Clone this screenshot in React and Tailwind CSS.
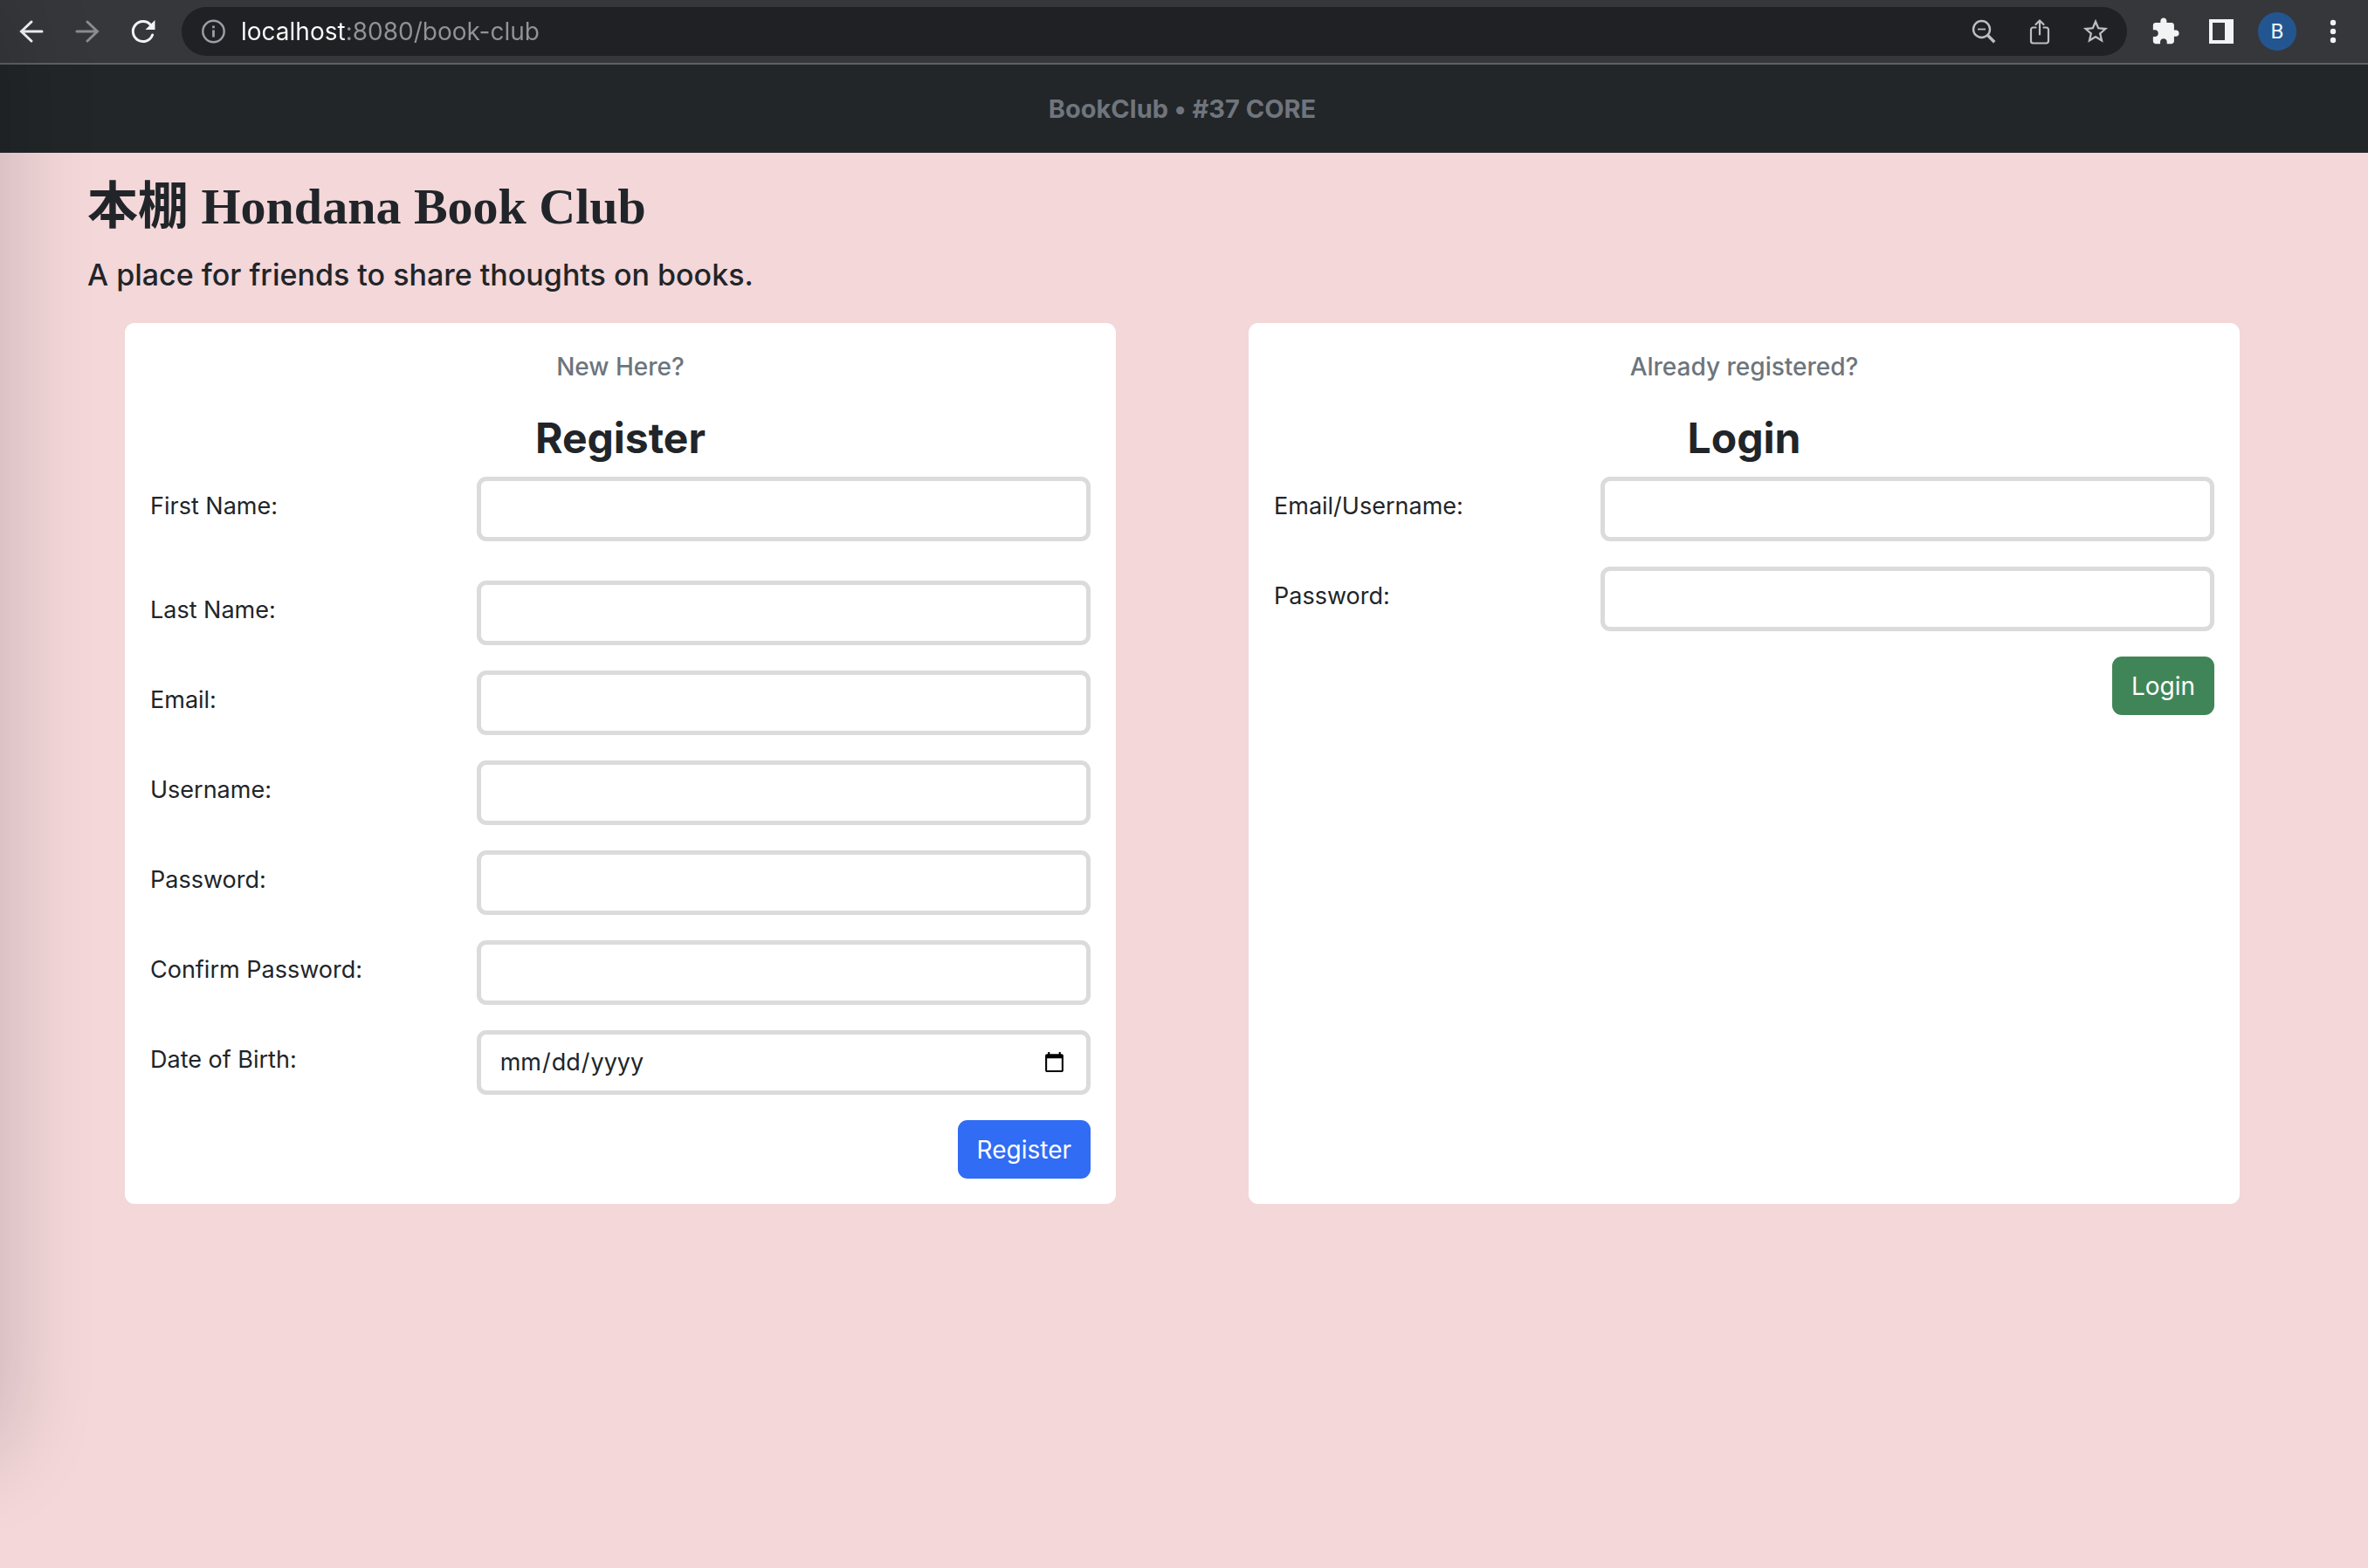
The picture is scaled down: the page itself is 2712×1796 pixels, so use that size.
import React from "react";

function ToolbarButton({ label, children }) {
  return (
    <button type="button" aria-label={label} className="flex h-14 w-16 shrink-0 items-center justify-center">
      {children}
    </button>
  );
}

function BrowserBar() {
  return (
    <header className="flex h-[74px] items-center border-b-2 border-[#5f6063] bg-[#36373b] pr-2 pl-1 text-[#f1f3f4]">
      <ToolbarButton label="Back">
        <svg width="32" height="32" viewBox="0 0 32 32" fill="none" stroke="currentColor" strokeWidth="3" strokeLinecap="round">
          <path d="M28 16H5M16 5L4.500 16L16 27" />
        </svg>
      </ToolbarButton>
      <ToolbarButton label="Forward">
        <svg width="32" height="32" viewBox="0 0 32 32" fill="none" stroke="#8b8c8f" strokeWidth="3" strokeLinecap="round">
          <path d="M4 16H27M16 5L27.500 16L16 27" />
        </svg>
      </ToolbarButton>
      <ToolbarButton label="Reload">
        <svg width="32" height="32" viewBox="0 0 32 32">
          <path d="M26.600 20A11.500 11.500 0 1 1 24.500 8.500" fill="none" stroke="currentColor" strokeWidth="3" strokeLinecap="round" />
          <path d="M29.500 3V14H18.500Z" fill="currentColor" />
        </svg>
      </ToolbarButton>
      <div className="mx-3 flex h-14 flex-1 items-center rounded-full bg-[#202124] pr-1 pl-[22px] text-[#bdbec0]">
        <svg width="30" height="30" viewBox="0 0 30 30" className="mr-4 shrink-0 text-[#9aa0a6]">
          <circle cx="14.500" cy="15" r="12.200" fill="none" stroke="currentColor" strokeWidth="2.400" />
          <path d="M14.500 13.500V21.500M14.500 8.500V11.200" stroke="currentColor" strokeWidth="2.800" />
        </svg>
        <input
          type="text"
          aria-label="Address"
          defaultValue="localhost:8080/book-club"
          className="min-w-0 flex-1 bg-[linear-gradient(90deg,#ffffff_121px,#929396_121px)] bg-clip-text font-['Inter',sans-serif] text-[28px] text-transparent outline-none"
        />
        <ToolbarButton label="Zoom out">
          <svg width="32" height="32" viewBox="0 0 32 32" fill="none" stroke="currentColor">
            <circle cx="13.500" cy="13.500" r="9.500" strokeWidth="2.400" />
            <path d="M9 13.500H18" strokeWidth="1.800" />
            <path d="M20.300 20.300L28.200 28.200" strokeWidth="3.400" />
          </svg>
        </ToolbarButton>
        <ToolbarButton label="Share">
          <svg width="32" height="32" viewBox="0 0 32 32" fill="none" stroke="currentColor" strokeWidth="2.200" strokeLinecap="round" strokeLinejoin="round">
            <path d="M11.500 11.500H8.500A2.500 2.500 0 0 0 6 14V27A2.500 2.500 0 0 0 8.500 29.500H23.500A2.500 2.500 0 0 0 26 27V14A2.500 2.500 0 0 0 23.500 11.500H20.500" />
            <path d="M16 19.500V4M11.500 8L16 3.500L20.500 8" />
          </svg>
        </ToolbarButton>
        <ToolbarButton label="Bookmark this page">
          <svg width="34" height="34" viewBox="0 0 24 24" fill="currentColor">
            <path d="M22 9.240l-7.190-.62L12 2 9.190 8.630 2 9.240l5.460 4.730L5.820 21 12 17.270 18.180 21l-1.630-7.030L22 9.240zM12 15.400l-3.760 2.270 1-4.280-3.320-2.880 4.380-.38L12 6.100l1.710 4.040 4.380.38-3.320 2.880 1 4.280L12 15.400z" />
          </svg>
        </ToolbarButton>
      </div>
      <ToolbarButton label="Extensions">
        <svg width="34" height="34" viewBox="0 0 24 24" fill="currentColor">
          <path d="M20.500 11H19V7c0-1.100-.9-2-2-2h-4V3.500C13 2.120 11.880 1 10.500 1S8 2.120 8 3.500V5H4c-1.100 0-1.990.9-1.990 2v3.800H3.500c1.490 0 2.700 1.210 2.700 2.700s-1.210 2.700-2.700 2.700H2V20c0 1.100.9 2 2 2h3.800v-1.500c0-1.490 1.210-2.700 2.700-2.700 1.490 0 2.700 1.210 2.700 2.700V22H17c1.100 0 2-.9 2-2v-4h1.500c1.380 0 2.500-1.120 2.500-2.500S21.880 11 20.500 11z" />
        </svg>
      </ToolbarButton>
      <ToolbarButton label="Side panel">
        <svg width="28" height="28" viewBox="0 0 28 28" fill="currentColor">
          <path fillRule="evenodd" d="M0 0H28V28H0ZM4 4V24H18V4Z" />
        </svg>
      </ToolbarButton>
      <ToolbarButton label="Profile">
        <span className="flex size-11 items-center justify-center rounded-full bg-[#235691] font-['Roboto',sans-serif] text-[24px]">B</span>
      </ToolbarButton>
      <ToolbarButton label="Menu">
        <svg width="32" height="32" viewBox="0 0 32 32" fill="currentColor">
          <circle cx="16" cy="6" r="3.200" />
          <circle cx="16" cy="16" r="3.200" />
          <circle cx="16" cy="26" r="3.200" />
        </svg>
      </ToolbarButton>
    </header>
  );
}

function Field({ id, label, type = "text", className = "" }) {
  return (
    <div className={`grid grid-cols-[1fr_2fr] gap-x-[22px] ${className}`}>
      <label htmlFor={id} className="text-[27px] leading-[68px]">
        {label}
      </label>
      <input
        id={id}
        type={type}
        className="h-[74px] w-full min-w-0 rounded-[11px] border-[5px] border-[#dbdbdb] bg-white px-[21px] text-[27px] outline-none"
      />
    </div>
  );
}

function Card({ hint, title, children }) {
  return (
    <section className="rounded-[11px] bg-white p-[29px]">
      <p className="text-center leading-[43px] font-medium text-[#6c757d]">{hint}</p>
      <h2 className="mt-[30px] mb-[14px] text-center text-[48px] leading-[60px] font-bold">{title}</h2>
      {children}
    </section>
  );
}

export default function App() {
  return (
    <div className="relative min-h-screen overflow-hidden bg-[#f3d7d9] font-['Inter',sans-serif] text-[28px] text-[#212529]">
      <BrowserBar />
      <nav className="flex h-[101px] items-center justify-center bg-[#222629] pr-1 text-[29px] font-bold text-[#70757d]">
        BookClub • #37 CORE
      </nav>
      <main className="pr-[104px] pl-[100px]">
        <h1 className="pt-[27px] font-['Liberation_Serif','Noto_Sans_CJK_JP',serif] text-[58px] leading-[69px] font-bold">
          本棚 Hondana Book Club
        </h1>
        <p className="mt-[22px] text-[34px] leading-[43px] font-medium">A place for friends to share thoughts on books.</p>
        <div className="mx-[43px] mt-[34px] grid grid-cols-2 gap-[152px]">
          <Card hint="New Here?" title="Register">
            <form className="flex flex-col gap-[29px]">
              <Field id="first-name" label="First Name:" className="mb-4" />
              <Field id="last-name" label="Last Name:" />
              <Field id="email" label="Email:" type="email" />
              <Field id="username" label="Username:" />
              <Field id="password" label="Password:" type="password" />
              <Field id="confirm-password" label="Confirm Password:" type="password" />
              <Field id="birth-date" label="Date of Birth:" type="date" />
              <button type="button" className="h-[67px] self-end rounded-[11px] bg-[#316cf4] px-[22px] text-white">
                Register
              </button>
            </form>
          </Card>
          <Card hint="Already registered?" title="Login">
            <form className="flex flex-col gap-[29px]">
              <Field id="login-name" label="Email/Username:" />
              <Field id="login-password" label="Password:" type="password" />
              <button type="button" className="h-[67px] self-end rounded-[11px] bg-[#408558] px-[22px] text-white">
                Login
              </button>
            </form>
          </Card>
        </div>
      </main>
      <div
        aria-hidden="true"
        className="pointer-events-none absolute top-0 bottom-[136px] -left-[300px] w-[300px] shadow-[0_0_110px_rgba(0,0,0,0.2)]"
      />
    </div>
  );
}
